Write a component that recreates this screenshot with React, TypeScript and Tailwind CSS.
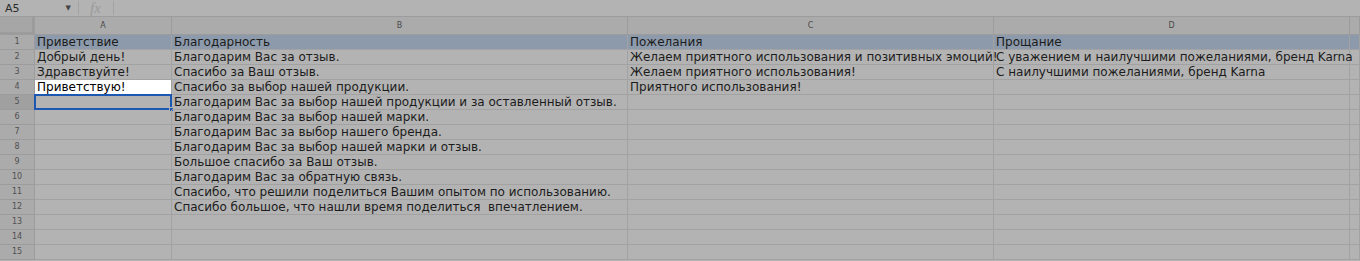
import React from "react";

const COLS = ["A", "B", "C", "D", ""];

const ROWS: string[][] = [
  ["Приветствие", "Благодарность", "Пожелания", "Прощание"],
  ["Добрый день!", "Благодарим Вас за отзыв.", "Желаем приятного использования и позитивных эмоций!", "С уважением и наилучшими пожеланиями, бренд Karna"],
  ["Здравствуйте!", "Спасибо за Ваш отзыв.", "Желаем приятного использования!", "С наилучшими пожеланиями, бренд Karna"],
  ["Приветствую!", "Спасибо за выбор нашей продукции.", "Приятного использования!", ""],
  ["", "Благодарим Вас за выбор нашей продукции и за оставленный отзыв.", "", ""],
  ["", "Благодарим Вас за выбор нашей марки.", "", ""],
  ["", "Благодарим Вас за выбор нашего бренда.", "", ""],
  ["", "Благодарим Вас за выбор нашей марки и отзыв.", "", ""],
  ["", "Большое спасибо за Ваш отзыв.", "", ""],
  ["", "Благодарим Вас за обратную связь.", "", ""],
  ["", "Спасибо, что решили поделиться Вашим опытом по использованию.", "", ""],
  ["", "Спасибо большое, что нашли время поделиться  впечатлением.", "", ""],
  ["", "", "", ""],
  ["", "", "", ""],
  ["", "", "", ""],
];

const GRID = "grid grid-cols-[35px_137px_456px_366px_356px_1fr]";

export default function App() {
  return (
    <div className="h-[261px] w-[1360px] overflow-hidden bg-[#b3b3b3] font-['DejaVu_Sans',Verdana,sans-serif] text-[#1c1c1c]">
      {/* formula bar */}
      <div className="flex h-[17px] items-center border-b border-[#9c9c9c] bg-[#b3b3b3] text-[11px] text-[#2a2a2a]">
        <div className="flex w-[78px] items-center justify-between pl-[5px] pr-[7px]">
          <span className="leading-none">A5</span>
          <span className="text-[7px] leading-none text-[#444]">▼</span>
        </div>
        <div className="h-[14px] w-px bg-[#a3a3a3]" />
        <span className="w-[34px] pl-[11px] font-['Liberation_Serif',serif] text-[15px] italic leading-none text-[#9a9a9a]">
          fx
        </span>
        <div className="h-[14px] w-px bg-[#a3a3a3]" />
      </div>

      {/* column headers */}
      <div className={`${GRID} h-[18px] bg-[#ababab] text-[8px] text-[#4a4a4a]`}>
        <div className="border-r-[3px] border-b-[3px] border-[#9c9c9c] bg-[#a6a6a6]" />
        {COLS.map((c, i) => (
          <div
            key={i}
            className="flex items-center justify-center border-r border-b border-[#9c9c9c] pt-px"
          >
            {c}
          </div>
        ))}
      </div>

      {/* rows */}
      {ROWS.map((row, r) => (
        <div
          key={r}
          className={`${GRID} h-[15px] ${r === 0 ? "bg-[#8c9aab]" : ""}`}
        >
          <div
            className={`flex items-center justify-center border-r border-b border-[#9c9c9c] text-[8px] text-[#505050] ${
              r === 4 ? "bg-[#a0a0a0]" : "bg-[#ababab]"
            }`}
          >
            {r + 1}
          </div>
          {[0, 1, 2, 3, 4].map((ci) => {
            const text = row[ci] ?? "";
            const white = r === 3 && ci === 0;
            const selected = r === 4 && ci === 0;
            return (
              <div
                key={ci}
                className={`relative whitespace-pre border-r border-b border-[#a2a2a2] pl-[2px] text-[12px] leading-[14px] ${
                  white ? "bg-white text-black" : ""
                }`}
              >
                {text}
                {selected && (
                  <>
                    <div className="absolute -top-px -left-px h-[16px] w-[138px] border-2 border-[#1c57b2]" />
                    <div className="absolute -right-[3px] -bottom-[3px] h-[5px] w-[5px] border border-[#b3b3b3] bg-[#1c57b2]" />
                  </>
                )}
              </div>
            );
          })}
        </div>
      ))}
    </div>
  );
}
